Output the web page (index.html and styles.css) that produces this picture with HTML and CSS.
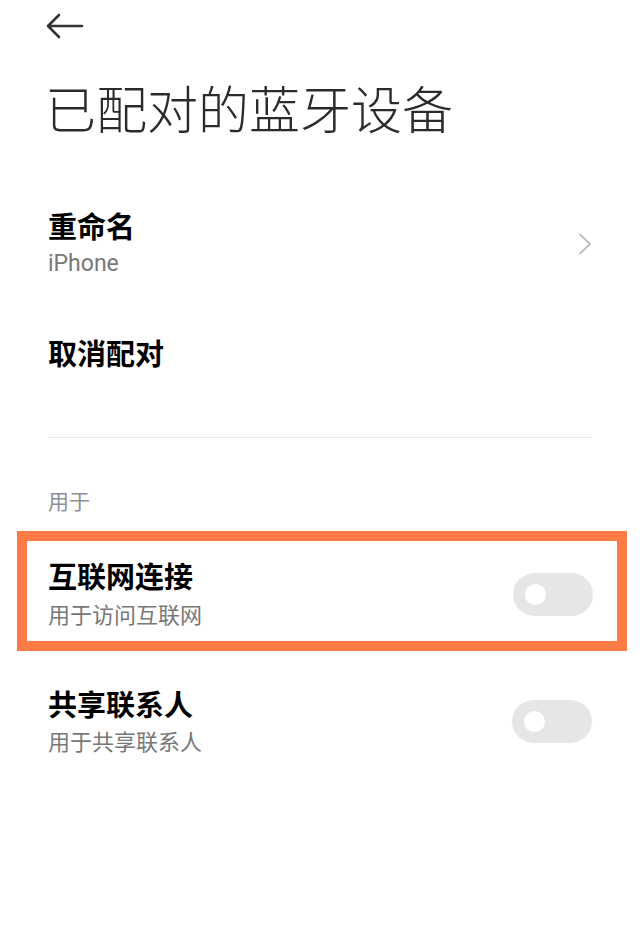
FILE: index.html
```html
<!DOCTYPE html>
<html lang="zh-CN">
<head>
    <meta charset="UTF-8">
    <meta name="viewport" content="width=device-width, initial-scale=1.0">
    <title>已配对的蓝牙设备</title>
    <link rel="stylesheet" href="styles.css">
</head>
<body>

    <div class="topbar">
        <svg class="back-icon" width="40" height="30" viewBox="0 0 40 30">
            <path d="M2 14 H36 M13 3 L2 14 L13 25" fill="none" stroke="#333" stroke-width="2.6" stroke-linecap="round" stroke-linejoin="round"/>
        </svg>
    </div>

    <h1 class="page-title">已配对的蓝牙设备</h1>

    <div class="row rename">
        <div class="text">
            <div class="item-title">重命名</div>
            <div class="item-sub latin">iPhone</div>
        </div>
        <svg class="chevron" width="14" height="22" viewBox="0 0 14 22">
            <path d="M2 1.5 L12 11 L2 20.5" fill="none" stroke="#bdbdbd" stroke-width="1.8" stroke-linecap="round" stroke-linejoin="round"/>
        </svg>
    </div>

    <div class="row unpair">
        <div class="item-title">取消配对</div>
    </div>

    <div class="divider"></div>

    <div class="section-label">用于</div>

    <div class="highlight">
        <div class="row switch-row">
            <div class="text">
                <div class="item-title">互联网连接</div>
                <div class="item-sub">用于访问互联网</div>
            </div>
            <div class="toggle"><span class="knob"></span></div>
        </div>
    </div>

    <div class="row switch-row contacts">
        <div class="text">
            <div class="item-title">共享联系人</div>
            <div class="item-sub">用于共享联系人</div>
        </div>
        <div class="toggle"><span class="knob"></span></div>
    </div>

</body>
</html>
```

FILE: styles.css
```css
body {
    margin: 0;
    padding: 0 48px;
    background-color: #ffffff;
    font-family: 'Roboto', 'Noto Sans CJK SC', sans-serif;
    color: #000;
}
.topbar {
    height: 54px;
    display: flex;
    align-items: center;
    margin-left: -2px;
}
.back-icon {
    display: block;
}
.page-title {
    margin: 28px 0 0 -3px;
    font-size: 51px;
    line-height: 60px;
    font-weight: 300;
    color: #2b2b2b;
}
.row {
    display: flex;
    align-items: center;
    justify-content: space-between;
}
.rename {
    margin-top: 68px;
}
.item-title {
    font-size: 29px;
    line-height: 36px;
    font-weight: 700;
    color: #000;
}
.item-sub {
    font-size: 22px;
    line-height: 36px;
    color: #777777;
}
.item-sub.latin {
    font-size: 23px;
}
.chevron {
    display: block;
    margin-top: -4px;
}
.unpair {
    margin-top: 55px;
}
.divider {
    margin-top: 64px;
    height: 1px;
    background-color: #e6e6e6;
}
.section-label {
    margin-top: 49px;
    font-size: 21px;
    line-height: 30px;
    color: #8b8e99;
}
.highlight {
    margin: 14px -35px 0 -31px;
    border: 10px solid #fe7b45;
    height: 81px;
    padding: 19px 24px 0 21px;
}
.highlight .switch-row {
    height: 74px;
}
.highlight .item-sub {
    margin-top: 2px;
}
.switch-row .text {
    display: flex;
    flex-direction: column;
}
.contacts {
    margin-top: 37px;
}
.contacts .item-sub {
    margin-top: 1px;
}
.toggle {
    width: 80px;
    height: 43px;
    border-radius: 22px;
    background-color: #e6e6e6;
    display: flex;
    align-items: center;
    padding-left: 12px;
    box-sizing: border-box;
    margin-top: -6px;
}
.knob {
    width: 21px;
    height: 21px;
    border-radius: 50%;
    background-color: #ffffff;
}
```
